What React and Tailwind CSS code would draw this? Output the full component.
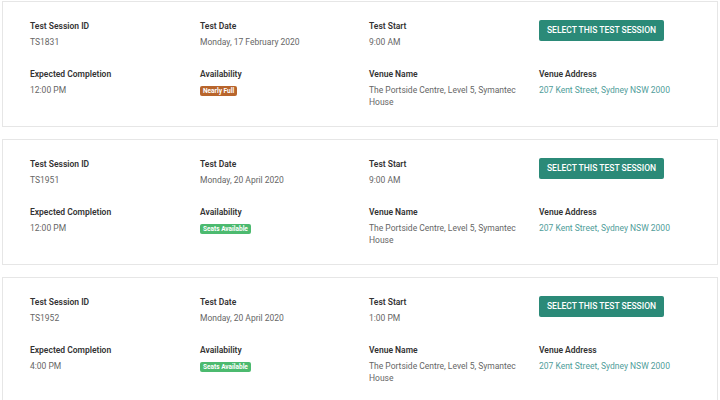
import React from "react";

const sessions = [
  { id: "TS1831", date: "Monday, 17 February 2020", start: "9:00 AM", end: "12:00 PM", status: "full" },
  { id: "TS1951", date: "Monday, 20 April 2020", start: "9:00 AM", end: "12:00 PM", status: "open" },
  { id: "TS1952", date: "Monday, 20 April 2020", start: "1:00 PM", end: "4:00 PM", status: "open" },
];

function Field({ label, children }) {
  return (
    <div>
      <div className="text-[8.5px] font-semibold leading-[16px] text-[#333]">{label}</div>
      <div className="mt-[2px] text-[8.5px] leading-[12px] text-[#666]">{children}</div>
    </div>
  );
}

function Badge({ status }) {
  if (status === "full") {
    return (
      <span className="inline-block rounded-[2px] bg-[#b8652c] px-[3px] text-[6.5px] font-bold leading-[10px] text-white">
        Nearly Full
      </span>
    );
  }
  return (
    <span className="inline-block rounded-[2px] bg-[#4cba6f] px-[3px] text-[6.5px] font-bold leading-[10px] text-white">
      Seats Available
    </span>
  );
}

function SessionCard({ s }) {
  return (
    <div className="h-[126px] border border-[#e6e6e6] bg-white pl-[27px] pt-[16px]">
      <div className="grid grid-cols-[170px_169px_170px_170px] gap-y-[18px]">
        <Field label="Test Session ID">{s.id}</Field>
        <Field label="Test Date">{s.date}</Field>
        <Field label="Test Start">{s.start}</Field>
        <div className="pt-[2px]">
          <button className="block h-[21px] w-[125px] rounded-[2px] bg-[#2b8a78] text-[8.5px] font-medium uppercase leading-[21px] text-white">
            Select this test session
          </button>
        </div>
        <Field label="Expected Completion">{s.end}</Field>
        <Field label="Availability">
          <Badge status={s.status} />
        </Field>
        <Field label="Venue Name">
          <div className="w-[160px]">The Portside Centre, Level 5, Symantec House</div>
        </Field>
        <Field label="Venue Address">
          <span className="text-[#4f9d9a]">207 Kent Street, Sydney NSW 2000</span>
        </Field>
      </div>
    </div>
  );
}

export default function App() {
  return (
    <div className="h-[400px] w-[720px] overflow-hidden bg-white px-[2px] pt-[1px]" style={{ fontFamily: "Roboto, sans-serif" }}>
      <div className="flex flex-col gap-[12px]">
        {sessions.map((s) => (
          <SessionCard key={s.id} s={s} />
        ))}
      </div>
    </div>
  );
}
